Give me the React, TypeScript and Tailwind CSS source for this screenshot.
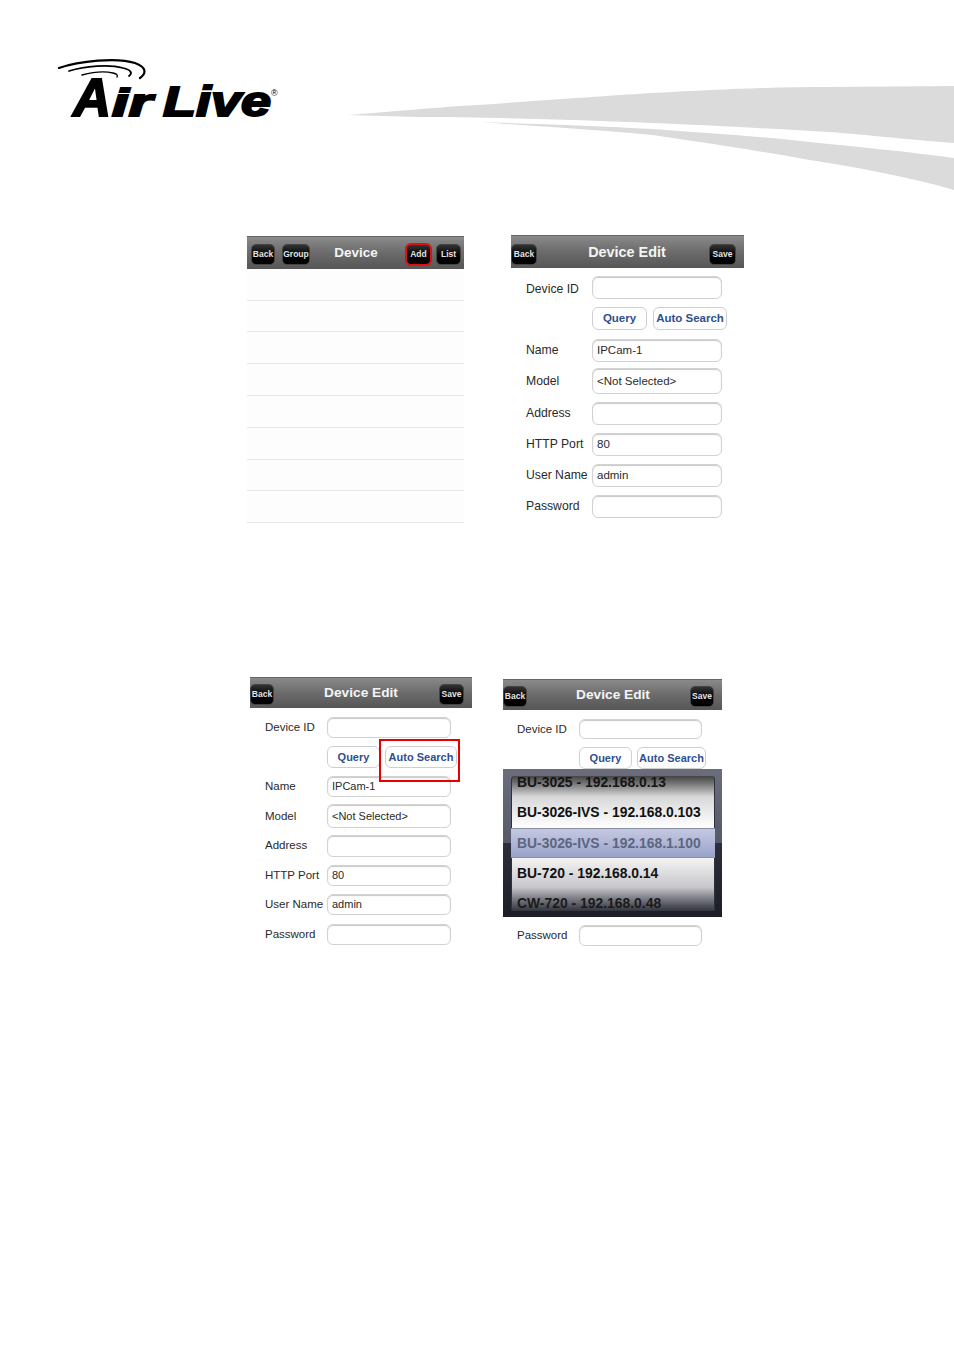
const font = "[font-family:'Liberation_Sans',Arial,sans-serif]";

function Logo() {
  const ff = "'Liberation Sans', Arial, sans-serif";
  return (
    <svg width="230" height="70" viewBox="0 0 230 70" className="block">
      <g fill="none" stroke="#000" strokeLinecap="round">
        <path d="M2 10 C22 3 60 -1 78 5 C89 9 90 15 83 20" strokeWidth="2.2" />
        <path d="M12 13 C28 8 52 6 66 10 C74 12 76 15 72 18" strokeWidth="1.8" />
        <path d="M25 17 C36 14 48 13 56 15 C60 16 61 17 60 19" strokeWidth="1.4" />
      </g>
      <text x="16" y="58" fontFamily={ff} fontWeight="700" fontStyle="italic" fontSize="54" textLength="38" lengthAdjust="spacingAndGlyphs" stroke="#000" strokeWidth="2">A</text>
      <text x="55" y="58" fontFamily={ff} fontWeight="700" fontStyle="italic" fontSize="38" textLength="40" lengthAdjust="spacingAndGlyphs" stroke="#000" strokeWidth="2">ir</text>
      <text x="106" y="58" fontFamily={ff} fontWeight="700" fontStyle="italic" fontSize="42" textLength="108" lengthAdjust="spacingAndGlyphs" stroke="#000" strokeWidth="2">Live</text>
      <text x="214" y="38" fontFamily={ff} fontSize="9">®</text>
    </svg>
  );
}

function Swoosh() {
  return (
    <svg width="954" height="200" viewBox="0 0 954 200" className="absolute left-0 top-0">
      <path d="M348 115 C400 111 440 107 477 105 C560 99 620 95 653 93 C720 89 780 87 829 87 L954 86 L954 143 C900 139 870 135 829 132 C760 128 700 125 653 123 C580 120 480 117 418 117 Z" fill="#dbdbdb" />
      <path d="M481 122 C540 124 600 126 653 129 C700 133 760 136 810 142 C860 147 910 152 954 158 L954 190 C910 177 860 168 810 160 C760 151 700 142 653 135 C600 130 530 126 481 122 Z" fill="#dbdbdb" />
    </svg>
  );
}

function DarkBtn({ label, cls }: { label: string; cls: string }) {
  return (
    <div className={`flex h-[21px] items-center justify-center rounded-[5px] border border-[#444] bg-gradient-to-b from-[#333] via-[#080808] to-[#000] text-[8.5px] font-bold text-[#e4e4e4] ${cls}`}>
      {label}
    </div>
  );
}

function Header({ cls, title, titleCls, children }: { cls: string; title: string; titleCls: string; children: React.ReactNode }) {
  return (
    <div className={`relative flex items-center border-t border-[#666] bg-gradient-to-b from-[#8a8a8a] via-[#6b6b6b] to-[#565656] ${cls}`}>
      {children}
      <span className={`absolute top-1/2 -translate-y-1/2 -translate-x-1/2 font-bold text-[#f4f4f4] ${titleCls}`}>{title}</span>
    </div>
  );
}

function Field({ cls, value, text }: { cls: string; value?: string; text: string }) {
  return (
    <div className={`flex items-center rounded-[6px] border border-[#d2d2d2] bg-white px-1 text-[#2a2a2a] shadow-[inset_0_1px_1px_rgba(0,0,0,0.22)] ${text} ${cls}`}>
      {value}
    </div>
  );
}

function LightBtn({ label, cls, text }: { label: string; cls: string; text: string }) {
  return (
    <div className={`flex items-center justify-center rounded-[6px] border border-[#cfcfcf] bg-white font-bold text-[#2f4f8f] ${text} ${cls}`}>
      {label}
    </div>
  );
}

function DeviceList() {
  const rows = ["h-[32px]", "h-[31px]", "h-[32px]", "h-[32px]", "h-[32px]", "h-[32px]", "h-[31px]", "h-[32px]"];
  return (
    <div className="w-[217px]">
      <Header cls="h-[33px] pl-1 pr-[3px] pt-[2px]" title="Device" titleCls="left-[109px] text-[13.5px]">
        <DarkBtn label="Back" cls="w-[24px]" />
        <DarkBtn label="Group" cls="ml-[7px] w-[28px]" />
        <DarkBtn label="Add" cls="ml-auto w-[25px] outline outline-2 -outline-offset-1 outline-[#e01010]" />
        <DarkBtn label="List" cls="ml-[5px] w-[25px]" />
      </Header>
      {rows.map((h, i) => (
        <div key={i} className={`${h} border-b border-[#e6e6e6] bg-[#fdfdfd]`} />
      ))}
    </div>
  );
}

function EditLarge() {
  const text = "text-[11.5px]";
  const label = "w-[66px] shrink-0 text-[12.2px] text-[#2a2a2a]";
  return (
    <div className="w-[233px]">
      <Header cls="h-[33px] pr-2 pt-1" title="Device Edit" titleCls="left-[116px] mt-px text-[14.4px]">
        <DarkBtn label="Back" cls="w-[26px]" />
        <DarkBtn label="Save" cls="ml-auto w-[27px]" />
      </Header>
      <div className="pl-[15px]">
        <div className="mt-2 flex h-[23px] items-center"><span className={`${label} mt-1`}>Device ID</span><Field cls="h-[23px] w-[130px]" text={text} /></div>
        <div className="mt-2 flex h-[23px] pl-[66px]">
          <LightBtn label="Query" cls="h-[23px] w-[55px] pt-px" text="text-[11.5px]" />
          <LightBtn label="Auto Search" cls="ml-[6px] h-[23px] w-[74px] pt-px" text="text-[11.5px]" />
        </div>
        <div className="mt-[9px] flex h-[23px] items-center"><span className={label}>Name</span><Field cls="h-[23px] w-[130px]" value="IPCam-1" text={text} /></div>
        <div className="mt-[6px] flex h-[26px] items-center"><span className={`${label} mt-px`}>Model</span><Field cls="h-[26px] w-[130px] pt-px" value="<Not Selected>" text="text-[11.5px]" /></div>
        <div className="mt-2 flex h-[23px] items-center"><span className={label}>Address</span><Field cls="h-[23px] w-[130px]" text={text} /></div>
        <div className="mt-2 flex h-[23px] items-center"><span className={label}>HTTP Port</span><Field cls="h-[23px] w-[130px]" value="80" text={text} /></div>
        <div className="mt-2 flex h-[23px] items-center"><span className={label}>User Name</span><Field cls="h-[23px] w-[130px]" value="admin" text={text} /></div>
        <div className="mt-2 flex h-[23px] items-center"><span className={label}>Password</span><Field cls="h-[23px] w-[130px]" text={text} /></div>
      </div>
    </div>
  );
}

function EditSmall() {
  const text = "text-[11px]";
  const label = "w-[62px] shrink-0 text-[11.5px] text-[#2a2a2a]";
  return (
    <div className="w-[222px]">
      <Header cls="h-[31px] pr-2 pt-[3px]" title="Device Edit" titleCls="left-[111px] text-[13.7px]">
        <DarkBtn label="Back" cls="w-[24px]" />
        <DarkBtn label="Save" cls="ml-auto w-[25px]" />
      </Header>
      <div className="pl-[15px]">
        <div className="mt-[9px] flex h-[21px] items-center"><span className={`${label} mt-px`}>Device ID</span><Field cls="h-[21px] w-[124px]" text={text} /></div>
        <div className="relative mt-2 flex h-[22px] pl-[62px]">
          <LightBtn label="Query" cls="h-[22px] w-[53px]" text="text-[11px]" />
          <LightBtn label="Auto Search" cls="ml-[5px] h-[22px] w-[72px]" text="text-[11px]" />
          <div className="absolute left-[114px] top-[-7px] h-[43px] w-[81px] border-2 border-[#e80000]" />
        </div>
        <div className="mt-2 flex h-[21px] items-center"><span className={label}>Name</span><Field cls="h-[21px] w-[124px]" value="IPCam-1" text={text} /></div>
        <div className="mt-[7px] flex h-[24px] items-center"><span className={`${label} mt-px`}>Model</span><Field cls="h-[24px] w-[124px]" value="<Not Selected>" text="text-[11px]" /></div>
        <div className="mt-[7px] flex h-[22px] items-center"><span className={label}>Address</span><Field cls="h-[22px] w-[124px]" text={text} /></div>
        <div className="mt-2 flex h-[21px] items-center"><span className={label}>HTTP Port</span><Field cls="h-[21px] w-[124px]" value="80" text={text} /></div>
        <div className="mt-2 flex h-[21px] items-center"><span className={`${label} mt-px`}>User Name</span><Field cls="h-[21px] w-[124px]" value="admin" text={text} /></div>
        <div className="mt-[9px] flex h-[21px] items-center"><span className={label}>Password</span><Field cls="h-[21px] w-[124px]" text={text} /></div>
      </div>
    </div>
  );
}

function Picker() {
  return (
    <div className="flex h-[148px] w-[219px] flex-col">
      <div className="h-[74px] bg-gradient-to-b from-[#6a6e7c] to-[#565a68]" />
      <div className="h-[74px] bg-gradient-to-b from-[#2c2f3c] to-[#1c1e26]" />
      <div className="absolute ml-2 mt-[7px] h-[135px] w-[204px] text-[13.9px] font-bold text-[#111]">
        <div className="h-[52px] rounded-t-[4px] border-x border-[#30323a] bg-gradient-to-b from-[#444] via-[#d8d8d8] via-40% to-white pl-[5px]">
          <div className="h-[15px] leading-[13px] text-[#151515]">BU-3025 - 192.168.0.13</div>
          <div className="mt-[6px] flex h-[30px] items-center">BU-3026-IVS - 192.168.0.103</div>
        </div>
        <div className="flex h-[30px] items-center border-y border-[#8a90a6] bg-gradient-to-b from-[#c4c8e0] via-[#b0b6d6] to-[#9aa2c8] pl-[6px] text-[#5c6680]">BU-3026-IVS - 192.168.1.100</div>
        <div className="h-[53px] border-x border-[#30323a] bg-gradient-to-b from-[#f4f4f4] via-[#c8c8cc] via-55% to-[#33353f] pl-[5px]">
          <div className="flex h-[30px] items-center">BU-720 - 192.168.0.14</div>
          <div className="mt-[7px] h-[16px] leading-[16px] text-[#1a1a1a]">CW-720 - 192.168.0.48</div>
        </div>
      </div>
    </div>
  );
}

function EditPicker() {
  const label = "w-[62px] shrink-0 text-[11.5px] text-[#2a2a2a]";
  return (
    <div className="w-[219px]">
      <Header cls="h-[31px] pr-2 pt-[3px]" title="Device Edit" titleCls="left-[110px] text-[13.7px]">
        <DarkBtn label="Back" cls="w-[24px]" />
        <DarkBtn label="Save" cls="ml-auto w-[24px]" />
      </Header>
      <div className="pl-[14px]">
        <div className="mt-[9px] flex h-[20px] items-center"><span className={`${label} mt-px`}>Device ID</span><Field cls="h-[20px] w-[123px]" text="text-[11px]" /></div>
        <div className="mt-2 flex h-[22px] pl-[62px]">
          <LightBtn label="Query" cls="h-[22px] w-[53px]" text="text-[11px]" />
          <LightBtn label="Auto Search" cls="ml-[5px] h-[22px] w-[69px]" text="text-[11px]" />
        </div>
      </div>
      <Picker />
      <div className="mt-2 flex h-[21px] items-center pl-[14px]"><span className={label}>Password</span><Field cls="h-[21px] w-[123px]" text="text-[11px]" /></div>
    </div>
  );
}

export default function App() {
  return (
    <div className={`relative h-[1350px] w-[954px] overflow-hidden bg-white ${font}`}>
      <Swoosh />
      <div className="relative pl-[57px] pt-[58px]">
        <Logo />
      </div>
      <div className="relative mt-[107px] flex items-start pl-[247px]">
        <div className="mt-px"><DeviceList /></div>
        <div className="ml-[47px]"><EditLarge /></div>
      </div>
      <div className="relative mt-[154px] flex items-start pl-[250px]">
        <EditSmall />
        <div className="ml-[31px] mt-[2px]"><EditPicker /></div>
      </div>
    </div>
  );
}
